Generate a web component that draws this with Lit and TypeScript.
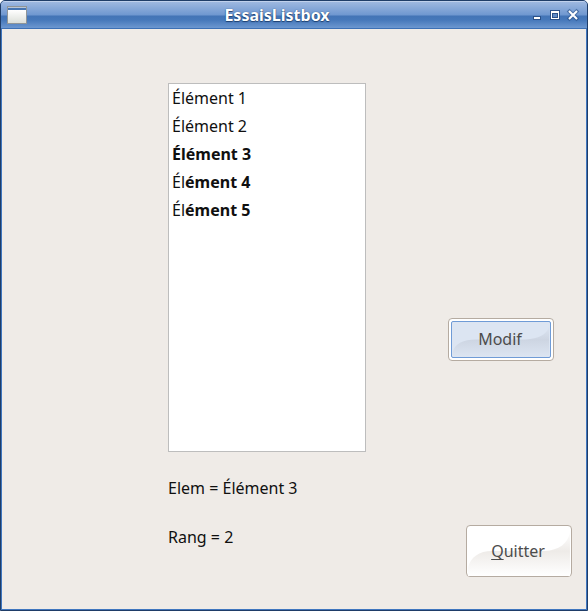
import { LitElement, html, css, svg } from "lit";
import { customElement, state } from "lit/decorators.js";

interface Item {
  plain: string;
  bold: string;
}

@customElement("app-root")
export class AppRoot extends LitElement {
  static styles = css`
    :host {
      display: block;
      font: 16px/22px "Noto Sans", "Open Sans", sans-serif;
      color: #101010;
      background: #ffffff;
    }
    .window {
      box-sizing: border-box;
      min-height: 100vh;
      display: flex;
      flex-direction: column;
      border: 1px solid #1f3d68;
      border-radius: 5px 5px 0 0;
      background: #3f76bf;
      overflow: hidden;
    }
    .titlebar {
      box-sizing: border-box;
      height: 28px;
      flex: none;
      display: grid;
      grid-template-columns: 52px 1fr 86px;
      align-items: center;
      border-top: 1px solid #c0d1ec;
      border-bottom: 1px solid #3c70b5;
      background: linear-gradient(#9db8e0 0, #6f97d0 13px, #4374b6 14px, #4678ba 18px, #6c97d0 26px);
    }
    .app-icon {
      display: block;
      margin-left: 6px;
    }
    .title {
      margin: 0;
      text-align: center;
      font-size: 16px;
      line-height: 22px;
      font-weight: 700;
      color: #ffffff;
      text-shadow: 0 0 1px #1f4070, 0 1px 1px #1f4070;
    }
    .controls {
      display: flex;
      justify-content: flex-end;
      gap: 2px;
      padding-right: 6px;
    }
    .control {
      width: 16px;
      height: 16px;
      padding: 0;
      border: 0;
      background: none;
    }
    .control svg {
      display: block;
    }
    .content {
      flex: 1;
      margin: 0 1px 1px;
      display: grid;
      grid-template-columns: 166fr 198fr 220fr;
      background: #efebe7;
    }
    .main {
      grid-column: 2;
      display: flex;
      flex-direction: column;
      padding: 54px 0 61px;
      white-space: nowrap;
    }
    .list {
      flex: 1;
      list-style: none;
      margin: 0 0 25px;
      padding: 0;
      border: 1px solid #bdbdbd;
      background: #ffffff;
    }
    .option {
      padding: 0 3px;
      line-height: 28px;
      cursor: default;
    }
    .info {
      display: block;
    }
    .info + .info {
      margin-top: 27px;
    }
    .actions {
      display: flex;
      flex-direction: column;
      align-items: flex-end;
      justify-content: flex-end;
      gap: 164px;
      padding: 0 14px 32px 0;
    }
    .button {
      position: relative;
      box-sizing: border-box;
      width: 106px;
      padding: 0 2px 2px 0;
      border: 1px solid #b5aba1;
      border-radius: 4px;
      background: #ffffff;
      color: #4c4c4c;
      font: inherit;
    }
    .modify {
      height: 43px;
      margin-right: 18px;
    }
    .quit {
      height: 52px;
      padding-bottom: 0;
    }
    .gloss {
      position: absolute;
      inset: 0;
      width: 100%;
      height: 100%;
    }
    .face {
      box-sizing: border-box;
      position: absolute;
      inset: 2px;
      border: 1px solid #6f9bd6;
      border-radius: 2px;
      background: #dce5f2;
      overflow: hidden;
    }
    .label {
      position: relative;
    }
    .key {
      text-decoration: underline;
      text-decoration-thickness: 1px;
      text-underline-offset: 2px;
      text-decoration-skip-ink: none;
    }
  `;

  @state() private items: Item[] = [
    { plain: "Élément 1", bold: "" },
    { plain: "Élément 2", bold: "" },
    { plain: "", bold: "Élément 3" },
    { plain: "Él", bold: "ément 4" },
    { plain: "Él", bold: "ément 5" },
  ];

  @state() private rank = 2;

  private gloss(id: string, shade: string, base: string) {
    return html`<svg class="gloss" viewBox="0 0 100 50" preserveAspectRatio="none" aria-hidden="true">
      ${svg`<defs><linearGradient id=${id} gradientUnits="userSpaceOnUse" x1="0" y1="5" x2="0" y2="50">
        <stop offset="0" stop-color=${base}></stop>
        <stop offset="0.45" stop-color=${shade}></stop>
        <stop offset="1" stop-color=${base}></stop>
      </linearGradient></defs>
      <path d="M1 50V42C3 31 12 25 24 25H75C88 24 97 18 99 6V50Z" fill=${`url(#${id})`}></path>`}
    </svg>`;
  }

  render() {
    const current = this.items[this.rank];
    return html`
      <div class="window">
        <header class="titlebar">
          <svg class="app-icon" width="20" height="18" viewBox="0 0 20 18" aria-hidden="true">
            <defs>
              <linearGradient id="page" x1="0" y1="0" x2="0" y2="1">
                <stop offset="0" stop-color="#ffffff"></stop>
                <stop offset="1" stop-color="#dcdfd9"></stop>
              </linearGradient>
            </defs>
            <rect width="20" height="18" fill="#8f9598"></rect>
            <rect x="1" y="1" width="18" height="16" fill="#b9c5d5"></rect>
            <rect x="1" y="2" width="18" height="2" fill="#4675b2"></rect>
            <rect x="1" y="4" width="18" height="13" fill="url(#page)"></rect>
          </svg>
          <h1 class="title">EssaisListbox</h1>
          <div class="controls">
            <button class="control" aria-label="Réduire">
              <svg width="16" height="16" viewBox="0 0 16 16">
                <rect x="4" y="9" width="8" height="4" fill="#2b5189"></rect>
                <rect x="5" y="10" width="6" height="2" fill="#fff"></rect>
              </svg>
            </button>
            <button class="control" aria-label="Agrandir">
              <svg width="16" height="16" viewBox="0 0 16 16">
                <path d="M3 3H13V13H3Z" fill="#2b5189"></path>
                <path d="M4 4H12V12H4Z" fill="#fff"></path>
                <path d="M5 6H11V11H5Z" fill="#2b5189"></path>
                <path d="M6 7H10V10H6Z" fill="#5f8ac5"></path>
              </svg>
            </button>
            <button class="control" aria-label="Fermer">
              <svg width="16" height="16" viewBox="0 0 16 16" fill="none">
                <path d="M4.5 4.5L11.5 11.5M11.5 4.5L4.5 11.5" stroke="#2b5189" stroke-opacity="0.6" stroke-width="4" stroke-linecap="square"></path>
                <path d="M4 4L12 12M12 4L4 12" stroke="#fff" stroke-width="2"></path>
              </svg>
            </button>
          </div>
        </header>
        <main class="content">
          <section class="main">
            <ul class="list" role="listbox" aria-label="Éléments" tabindex="0">
              ${this.items.map(
                (item, i) => html`<li
                  class="option"
                  role="option"
                  aria-selected=${i === this.rank ? "true" : "false"}
                  @click=${() => (this.rank = i)}
                >${item.plain}<b>${item.bold}</b></li>`
              )}
            </ul>
            <output class="info">Elem = ${current.plain + current.bold}</output>
            <output class="info">Rang = ${this.rank}</output>
          </section>
          <div class="actions">
            <button class="button modify">
              <span class="face">${this.gloss("gloss-modify", "#cdd5e2", "#dce5f2")}</span>
              <span class="label">Modif</span>
            </button>
            <button class="button quit">
              ${this.gloss("gloss-quit", "#eeebe8", "#ffffff")}
              <span class="label"><span class="key">Q</span>uitter</span>
            </button>
          </div>
        </main>
      </div>
    `;
  }
}
